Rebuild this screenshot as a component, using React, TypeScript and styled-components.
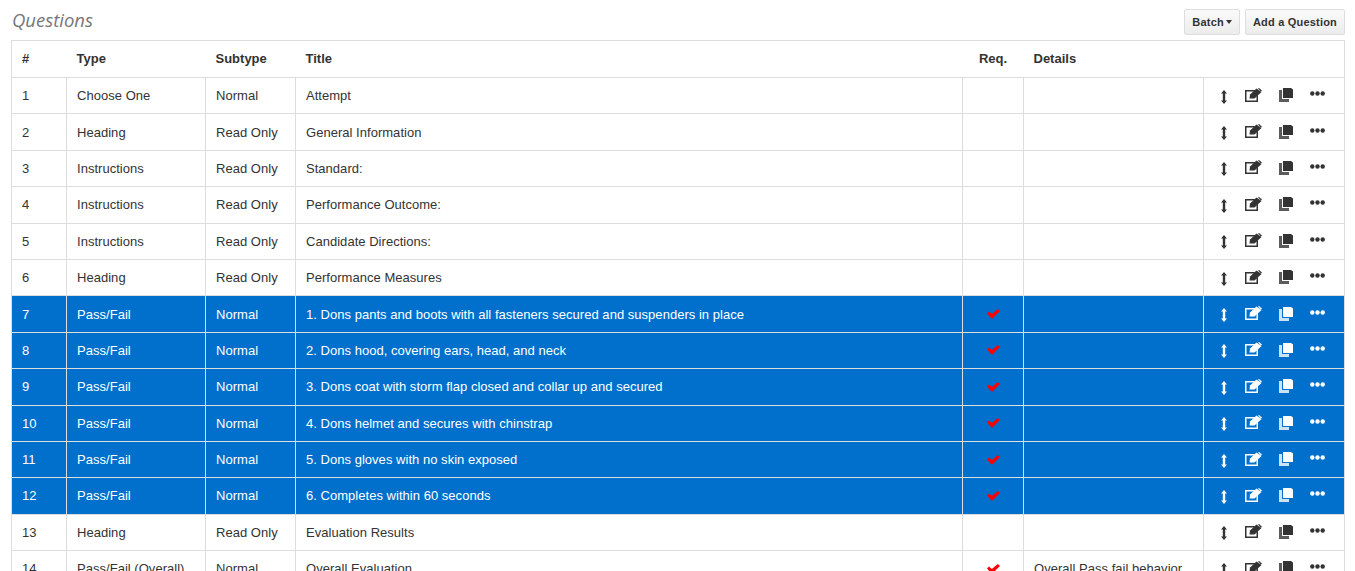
import React from 'react';
import styled, { createGlobalStyle } from 'styled-components';

const GlobalStyle = createGlobalStyle`
  html, body {
    margin: 0;
    padding: 0;
    height: 571px;
    overflow: hidden;
    background: #fff;
    font-family: "Liberation Sans", Arial, sans-serif;
    font-size: 13px;
    color: #333;
  }
`;

const Page = styled.div`
  padding: 8px 10px 0 11px;
`;

const TitleBar = styled.div`
  display: flex;
  justify-content: space-between;
  align-items: flex-start;
  height: 32px;
`;

const Heading = styled.h3`
  margin: 0 0 0 1px;
  font-family: "Open Sans", "Noto Sans", sans-serif;
  font-size: 18.5px;
  font-style: italic;
  font-weight: 400;
  line-height: 23px;
  color: #777;
`;

const Actions = styled.div`
  display: flex;
  gap: 5px;
  margin-top: 1px;
`;

const ActionButton = styled.button`
  height: 26px;
  padding: 0 7px;
  display: inline-flex;
  align-items: center;
  gap: 2px;
  border: 1px solid #ddd;
  border-radius: 2px;
  background: linear-gradient(#fafafa, #ececec);
  font-family: "Liberation Sans", Arial, sans-serif;
  font-size: 11px;
  font-weight: 700;
  letter-spacing: 0.2px;
  color: #333;
`;

const Caret = styled.span`
  width: 0;
  height: 0;
  border-top: 4px solid #333;
  border-left: 3px solid transparent;
  border-right: 3px solid transparent;
`;

const Table = styled.table`
  width: 1334px;
  table-layout: fixed;
  border-collapse: collapse;
  border: 1px solid #ddd;
`;

const HeadCell = styled.th<{ $center?: boolean }>`
  height: 34px;
  padding: 0 10px 2px;
  border-bottom: 1px solid #ddd;
  text-align: ${p => (p.$center ? 'center' : 'left')};
  font-size: 13px;
  font-weight: 700;
  color: #333;
`;

const Row = styled.tr<{ $selected: boolean }>`
  background: ${p => (p.$selected ? '#0070cc' : '#fff')};
  color: ${p => (p.$selected ? '#fff' : '#333')};
`;

const Cell = styled.td`
  height: 35.4px;
  padding: 0 10px;
  border: 1px solid #ddd;
  font-size: 13px;
  letter-spacing: 0.03px;
  white-space: nowrap;
`;

const CheckCell = styled(Cell)`
  text-align: center;
  padding: 0;
`;

const IconRow = styled.div`
  display: flex;
  align-items: center;
  gap: 17px;
  padding-left: 6px;
  margin-top: -1px;
`;

const MoveIcon = () => (
  <svg width="8" height="14" viewBox="0 0 8 14" style={{ marginTop: 3 }}>
    <path d="M4 0 7 3.4H5.200v7.2H7L4 14l-3-3.4h1.800V3.4H1z" fill="currentColor" />
  </svg>
);

const EditIcon = () => (
  <svg width="17" height="14" viewBox="0 0 17 14" style={{ marginTop: -1 }}>
    <path d="M0 2h10.500L9 3.500H1.500v9h10V8L13 6.500V14H0z" fill="currentColor" />
    <path d="M4.500 10.500 5 6.500l6.500-6 5 3.500L9.500 10.500z" fill="currentColor" />
    <path d="M13 0.500 14 0l3 2.500-1 1z" fill="currentColor" />
  </svg>
);

const CopyIcon = () => (
  <svg width="14" height="14" viewBox="0 0 14 14">
    <path d="M0 2h3v9h7v3H0z" fill="currentColor" opacity=".8" />
    <path d="M4 0h8l2 1.500V10H4z" fill="currentColor" />
  </svg>
);

const DotsIcon = () => (
  <svg width="15" height="5" viewBox="0 0 15 5" style={{ marginTop: -3 }}>
    <circle cx="2.300" cy="2.500" r="2.200" fill="currentColor" />
    <circle cx="7.500" cy="2.500" r="2.200" fill="currentColor" />
    <circle cx="12.700" cy="2.500" r="2.200" fill="currentColor" />
  </svg>
);

const CheckIcon = () => (
  <svg width="13" height="10" viewBox="0 0 13 10" style={{ display: 'block', margin: '0 auto' }}>
    <path d="M0 4.500 2 2.500 4.800 5 10.800 0 13 2 4.800 10z" fill="#f00" />
  </svg>
);

const questions = [
  ['Choose One', 'Normal', 'Attempt', false, ''],
  ['Heading', 'Read Only', 'General Information', false, ''],
  ['Instructions', 'Read Only', 'Standard:', false, ''],
  ['Instructions', 'Read Only', 'Performance Outcome:', false, ''],
  ['Instructions', 'Read Only', 'Candidate Directions:', false, ''],
  ['Heading', 'Read Only', 'Performance Measures', false, ''],
  ['Pass/Fail', 'Normal', '1. Dons pants and boots with all fasteners secured and suspenders in place', true, ''],
  ['Pass/Fail', 'Normal', '2. Dons hood, covering ears, head, and neck', true, ''],
  ['Pass/Fail', 'Normal', '3. Dons coat with storm flap closed and collar up and secured', true, ''],
  ['Pass/Fail', 'Normal', '4. Dons helmet and secures with chinstrap', true, ''],
  ['Pass/Fail', 'Normal', '5. Dons gloves with no skin exposed', true, ''],
  ['Pass/Fail', 'Normal', '6. Completes within 60 seconds', true, ''],
  ['Heading', 'Read Only', 'Evaluation Results', false, ''],
  ['Pass/Fail (Overall)', 'Normal', 'Overall Evaluation', true, 'Overall Pass fail behavior'],
] as const;

const App: React.FC = () => (
  <Page>
    <GlobalStyle />
    <TitleBar>
      <Heading>Questions</Heading>
      <Actions>
        <ActionButton>Batch <Caret /></ActionButton>
        <ActionButton>Add a Question</ActionButton>
      </Actions>
    </TitleBar>
    <Table>
      <colgroup>
        <col width="55" />
        <col width="139" />
        <col width="90" />
        <col width="667" />
        <col width="61" />
        <col width="180" />
        <col width="141" />
      </colgroup>
      <thead>
        <tr>
          <HeadCell>#</HeadCell>
          <HeadCell>Type</HeadCell>
          <HeadCell>Subtype</HeadCell>
          <HeadCell>Title</HeadCell>
          <HeadCell $center>Req.</HeadCell>
          <HeadCell>Details</HeadCell>
          <HeadCell />
        </tr>
      </thead>
      <tbody>
        {questions.map(([type, subtype, title, required, details], index) => (
          <Row key={index} $selected={index >= 6 && index <= 11}>
            <Cell>{index + 1}</Cell>
            <Cell>{type}</Cell>
            <Cell>{subtype}</Cell>
            <Cell>{title}</Cell>
            <CheckCell>{required && <CheckIcon />}</CheckCell>
            <Cell>{details}</Cell>
            <Cell>
              <IconRow>
                <MoveIcon />
                <EditIcon />
                <CopyIcon />
                <DotsIcon />
              </IconRow>
            </Cell>
          </Row>
        ))}
      </tbody>
    </Table>
  </Page>
);

export default App;
